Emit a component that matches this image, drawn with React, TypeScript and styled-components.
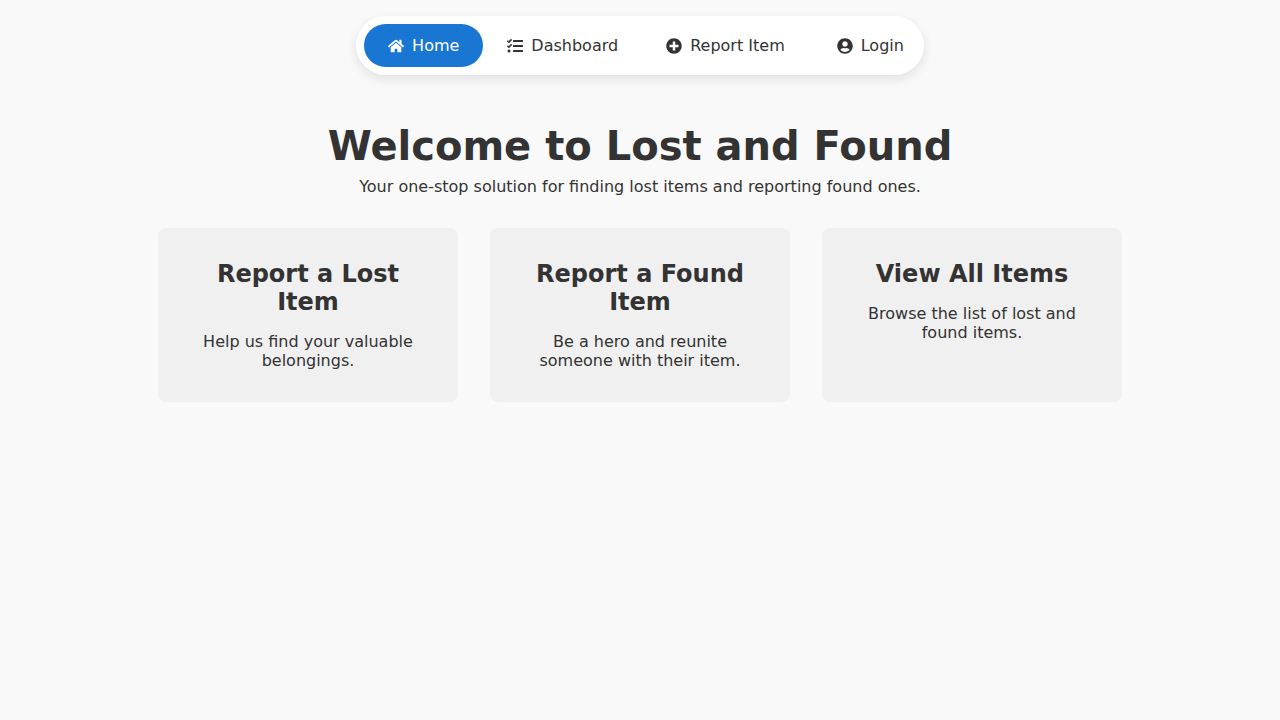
import React from 'react';
import styled, { createGlobalStyle } from 'styled-components';
import { FaHome, FaTasks, FaPlusCircle, FaUserCircle } from 'react-icons/fa';

const GlobalStyle = createGlobalStyle`
  *, *::before, *::after {
    box-sizing: border-box;
    margin: 0;
    padding: 0;
  }

  body {
    background: #f9f9f9;
    color: #333;
    font-family: "DejaVu Sans", sans-serif;
    font-size: 16px;
  }
`;

const Header = styled.header`
  display: flex;
  justify-content: center;
  padding: 16px;
`;

const Nav = styled.nav`
  display: flex;
  align-items: center;
  padding: 8px;
  border-radius: 50px;
  background: #fff;
  box-shadow: 0 4px 12px rgba(0, 0, 0, 0.1);
`;

const NavLink = styled.a<{ $active?: boolean }>`
  display: flex;
  align-items: center;
  gap: 8px;
  padding: 12px 24px;
  border-radius: 50px;
  background: ${({ $active }) => ($active ? '#1976d2' : 'transparent')};
  color: ${({ $active }) => ($active ? '#fff' : '#333')};
  text-decoration: none;
  white-space: nowrap;
`;

const LoginButton = styled.button`
  display: flex;
  align-items: center;
  gap: 8px;
  margin-left: 16px;
  padding: 12px;
  border: 0;
  border-radius: 50px;
  background: transparent;
  color: inherit;
  font: inherit;
  cursor: pointer;
`;

const Main = styled.main`
  padding: 32px;
  text-align: center;
`;

const Title = styled.h1`
  margin-bottom: 8px;
  font-size: 40px;
`;

const Cards = styled.section`
  display: flex;
  flex-wrap: wrap;
  justify-content: center;
  gap: 32px;
  margin-top: 32px;
`;

const Card = styled.a`
  width: 300px;
  padding: 32px;
  border-radius: 8px;
  background: #f0f0f0;
  color: inherit;
  text-decoration: none;
`;

const CardTitle = styled.h2`
  margin-bottom: 16px;
  font-size: 24px;
`;

const actions = [
  { title: 'Report a Lost Item', text: 'Help us find your valuable belongings.' },
  { title: 'Report a Found Item', text: 'Be a hero and reunite someone with their item.' },
  { title: 'View All Items', text: 'Browse the list of lost and found items.' },
];

export default function App() {
  return (
    <>
      <GlobalStyle />
      <Header>
        <Nav aria-label="Main">
          <NavLink href="#home" $active aria-current="page"><FaHome aria-hidden />Home</NavLink>
          <NavLink href="#dashboard"><FaTasks aria-hidden />Dashboard</NavLink>
          <NavLink href="#report"><FaPlusCircle aria-hidden />Report Item</NavLink>
          <LoginButton type="button"><FaUserCircle aria-hidden />Login</LoginButton>
        </Nav>
      </Header>
      <Main>
        <Title>Welcome to Lost and Found</Title>
        <p>Your one-stop solution for finding lost items and reporting found ones.</p>
        <Cards>
          {actions.map(({ title, text }) => (
            <Card key={title} href="#items">
              <CardTitle>{title}</CardTitle>
              <p>{text}</p>
            </Card>
          ))}
        </Cards>
      </Main>
    </>
  );
}
